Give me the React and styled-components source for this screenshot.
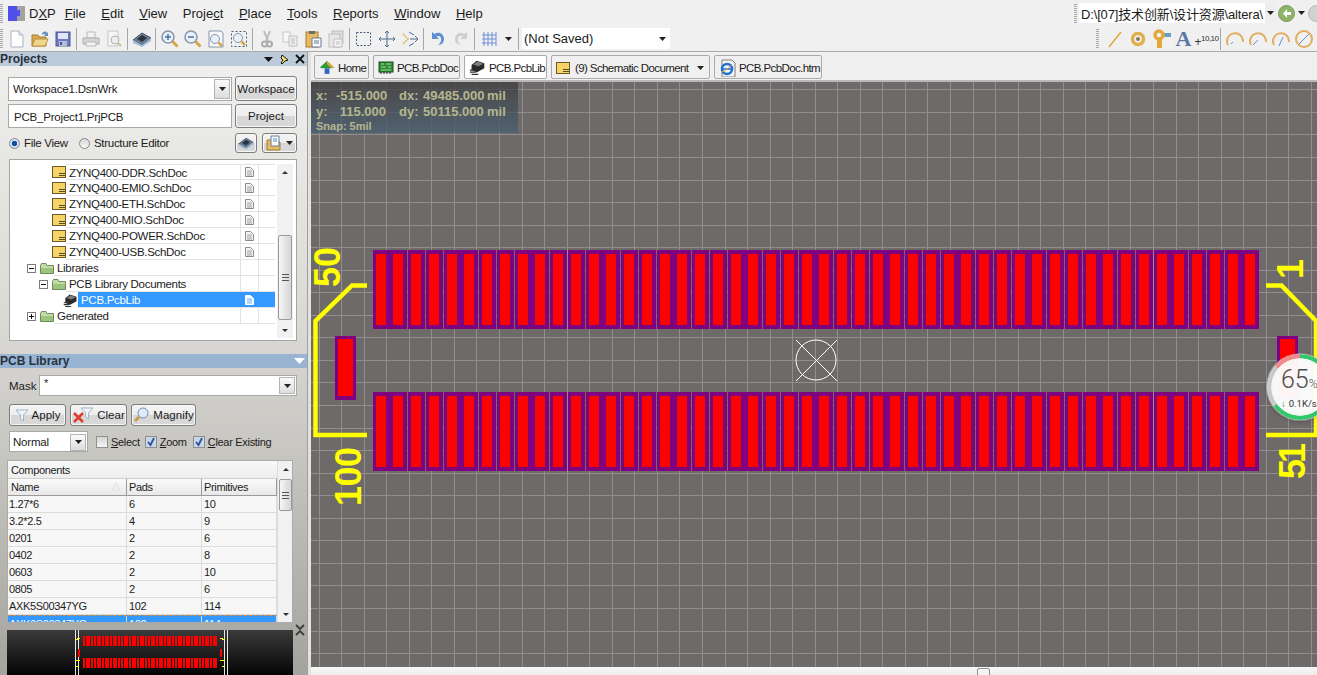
import React from "react";
import styled, { createGlobalStyle } from "styled-components";

const GlobalStyle = createGlobalStyle`
  html, body { margin: 0; padding: 0; background: #f0f0f0; }
  * { box-sizing: border-box; }
  svg { flex: none; }
  body { font-family: "Liberation Sans", "Noto Sans CJK SC", sans-serif; font-size: 12px; color: #1c1c1c; }
`;

const Window = styled.div`
  width: 1317px;
  height: 675px;
  overflow: hidden;
  display: flex;
  flex-direction: column;
  background: #f0f0f0;
`;

const MenuBar = styled.div`
  height: 26px;
  flex: none;
  display: flex;
  align-items: center;
  font-size: 13px;
`;

const Grip = styled.div`
  width: 3px;
  height: 19px;
  flex: none;
  background: repeating-linear-gradient(to bottom, #a8a8a8 0 1px, #f0f0f0 1px 2px);
`;

const LogoBox = styled.div`
  display: flex;
  margin-left: 5px;
  margin-right: 4px;
`;

const MenuItem = styled.span`
  margin-right: ${(p) => p.$gap}px;
  white-space: nowrap;
`;

const PathBox = styled.div`
  width: 197px;
  height: 20px;
  flex: none;
  margin-left: 2px;
  background: #fff;
  display: flex;
  align-items: center;
  font-size: 13px;
  letter-spacing: -0.15px;
  padding-left: 2px;
  position: relative;
  overflow: hidden;
  white-space: nowrap;
`;

const PathCaret = styled.div`
  position: absolute;
  right: 0;
  top: 0;
  width: 11px;
  height: 20px;
  background: #eeeeee;
  display: flex;
  align-items: center;
  justify-content: center;
`;

const Spacer = styled.div`
  flex: 1;
`;

const HistoryNav = styled.div`
  width: 39px;
  margin-left: 2px;
  flex: none;
  display: flex;
  align-items: center;
  gap: 3px;
`;

const ToolBar = styled.div`
  height: 26px;
  flex: none;
  display: flex;
  align-items: center;
  border-bottom: 1px solid #a9a9a9;
  padding-right: 2px;
`;

const ToolGrip = styled(Grip)`
  margin-right: ${(p) => p.$after}px;
`;

const Slot = styled.div`
  width: ${(p) => p.$w || 23}px;
  height: 24px;
  flex: none;
  display: flex;
  align-items: center;
  justify-content: center;
`;

const Sep = styled.div`
  width: 1px;
  height: 22px;
  flex: none;
  margin: 0 2px;
  background: #a6a6a6;
`;

const SavedCombo = styled.div`
  width: 148px;
  height: 21px;
  flex: none;
  margin-left: 1px;
  padding: 0 4px 0 2px;
  background: #fff;
  font-size: 13px;
  display: flex;
  align-items: center;
  justify-content: space-between;
`;

const Main = styled.div`
  flex: 1;
  min-height: 0;
  display: flex;
`;

const SidePanel = styled.div`
  width: 311px;
  flex: none;
  border-right: 3px solid #e2e2de;
  box-shadow: inset -1px 0 0 #9f9f9f;
  background: linear-gradient(to bottom, #f0f0ee 0%, #d9d8d4 45%, #a5a39d 100%);
  overflow: hidden;
`;

const PanelTitle = styled.div`
  height: 14px;
  width: 307px;
  background: ${(p) => p.$bg};
  font-weight: bold;
  font-size: 12px;
  line-height: 15px;
  color: #26323f;
  display: flex;
  align-items: center;
  justify-content: space-between;
  padding-right: 2px;
  margin-top: ${(p) => p.$top || 0}px;
`;

const TitleTools = styled.div`
  display: flex;
  align-items: center;
  gap: 5px;
`;

const Row = styled.div`
  display: flex;
  align-items: center;
  margin-top: ${(p) => p.$top}px;
  padding-left: ${(p) => p.$left}px;
  gap: ${(p) => p.$gap || 0}px;
`;

const Field = styled.div`
  width: ${(p) => p.$w}px;
  height: ${(p) => p.$h || 24}px;
  flex: none;
  background: #fff;
  border: 1px solid #a8a8a6;
  display: flex;
  align-items: center;
  justify-content: space-between;
  padding: 1px 1px 0 ${(p) => p.$pad || 4}px;
  font-size: 11.5px;
  letter-spacing: -0.2px;
  white-space: nowrap;
`;

const DropButton = styled.div`
  width: 16px;
  height: ${(p) => p.$h || 17}px;
  flex: none;
  background: linear-gradient(to bottom, #fafafa, #dcdcdc);
  border: 1px solid #b4b4b4;
  display: flex;
  align-items: center;
  justify-content: center;
`;

const PanelButton = styled.div`
  width: ${(p) => p.$w}px;
  height: ${(p) => p.$h || 25}px;
  flex: none;
  margin-left: ${(p) => p.$left || 0}px;
  border: 1px solid #7e7e7e;
  border-radius: 3px;
  box-shadow: inset 0 0 0 1px #f6f6f6;
  background: linear-gradient(to bottom, #f4f4f4 0%, #ededed 50%, #d6d6d6 52%, #d9d9d9 100%);
  display: flex;
  align-items: center;
  justify-content: center;
  gap: 3px;
  font-size: 11.5px;
  white-space: nowrap;
`;

const RadioLabel = styled.label`
  display: flex;
  align-items: center;
  gap: 4px;
  width: ${(p) => p.$w}px;
  flex: none;
  font-size: 11.5px;
  letter-spacing: -0.3px;
`;

const Radio = styled.span`
  width: 11px;
  height: 11px;
  flex: none;
  border-radius: 50%;
  border: 1px solid #8a8a8a;
  background: ${(p) => (p.$on ? "radial-gradient(circle, #14519c 0 2.5px, #cfe2f4 3px)" : "linear-gradient(#d6d6d6, #f6f6f6)")};
`;

const Tree = styled.div`
  width: 288px;
  height: 182px;
  margin: 6px 0 0 9px;
  background: #fff;
  border: 1px solid #a4a4a4;
  padding: 4px 1px 0 0;
  display: flex;
  gap: 2px;
`;

const TreeRows = styled.div`
  width: 265px;
  flex: none;
`;

const TreeRow = styled.div`
  height: 16px;
  display: flex;
`;

const TreeGutter = styled.div`
  width: ${(p) => p.$w}px;
  flex: none;
  display: flex;
  align-items: center;
  justify-content: flex-end;
  gap: 4px;
`;

const TreeBody = styled.div`
  flex: 1;
  display: flex;
  border-bottom: 1px solid #e3e3e3;
  border-top: ${(p) => (p.$first ? "1px solid #e3e3e3" : "0")};
  background: ${(p) => (p.$sel ? "#3399ff" : "transparent")};
  color: ${(p) => (p.$sel ? "#fff" : "#1c1c1c")};
`;

const TreeLabel = styled.div`
  flex: 1;
  padding-left: 3px;
  font-size: 11.5px;
  letter-spacing: -0.3px;
  line-height: 17px;
  white-space: nowrap;
`;

const TreeCol = styled.div`
  width: ${(p) => p.$w}px;
  flex: none;
  border-left: 1px solid ${(p) => (p.$sel ? "#3399ff" : "#e3e3e3")};
  display: flex;
  align-items: center;
  justify-content: center;
`;

const VScroll = styled.div`
  width: ${(p) => p.$w}px;
  height: ${(p) => p.$h}px;
  flex: none;
  background: #f1f1f1;
  position: relative;
`;

const ScrollArrow = styled.div`
  position: absolute;
  left: 50%;
  margin-left: -3px;
  width: 0;
  height: 0;
  border-left: 3px solid transparent;
  border-right: 3px solid transparent;
  ${(p) => (p.$down ? "bottom: 6px; border-top: 3px solid #333;" : "top: 7px; border-bottom: 3px solid #333;")}
`;

const ScrollThumb = styled.div`
  position: absolute;
  left: 1px;
  right: 1px;
  top: ${(p) => p.$top}px;
  height: ${(p) => p.$h}px;
  border: 1px solid #9a9a9a;
  border-radius: 2px;
  background: linear-gradient(to right, #f6f6f6, #d5d5d5);
  display: flex;
  align-items: center;
  justify-content: center;
  &::after {
    content: "";
    width: 7px;
    height: 7px;
    background: repeating-linear-gradient(to bottom, #555 0 1px, transparent 1px 3px);
  }
`;

const MaskLabel = styled.span`
  width: 30px;
  flex: none;
  font-size: 11.5px;
  padding-top: 1px;
`;

const MaskInput = styled(Field)`
  align-items: flex-start;
  padding-top: 1px;
  font-size: 11px;
  position: relative;
`;

const MaskDrop = styled(DropButton)`
  position: absolute;
  right: 1px;
  top: 1px;
`;

const CheckLabel = styled.label`
  display: flex;
  align-items: center;
  gap: 3px;
  flex: none;
  margin-left: ${(p) => p.$left}px;
  font-size: 11px;
  letter-spacing: -0.3px;
`;

const CheckBox = styled.span`
  width: 12px;
  height: 12px;
  flex: none;
  border: 1px solid #8f8f8f;
  background: ${(p) => (p.$on ? "#c9d6e8" : "linear-gradient(#d4d4d4, #f4f4f4)")};
  display: flex;
  align-items: center;
  justify-content: center;
`;

const CompTable = styled.div`
  width: 286px;
  height: 163px;
  margin: 8px 0 0 7px;
  border: 1px solid #aaaaaa;
  background: #f6f6f6;
  display: flex;
  overflow: hidden;
  font-size: 11px;
  letter-spacing: -0.35px;
`;

const CompBody = styled.div`
  width: 269px;
  flex: none;
`;

const CompTitle = styled.div`
  height: 18px;
  padding-left: 3px;
  line-height: 18px;
  background: linear-gradient(to bottom, #f8f8f8, #eeeeee);
  border-bottom: 1px solid #d0d0d0;
`;

const CompGrid = styled.div`
  display: grid;
  grid-template-columns: 119px 75px 75px;
  height: ${(p) => p.$h || 17}px;
  line-height: 17px;
  background: ${(p) => (p.$sel ? "#3399ff" : p.$head ? "linear-gradient(to bottom, #fbfbfb, #e8e8e8)" : "#f7f7f7")};
  color: ${(p) => (p.$sel ? "#fff" : "#1c1c1c")};
  border-top: ${(p) => (p.$sel ? "1px dashed #e08a2a" : "0")};
  border-bottom: 1px solid ${(p) => (p.$head ? "#9a9a9a" : "#dcdcdc")};
`;

const CompCell = styled.div`
  padding-left: ${(p) => p.$pad || 2}px;
  border-right: 1px solid ${(p) => (p.$head ? "#9a9a9a" : "#dcdcdc")};
  white-space: nowrap;
  position: relative;
  overflow: hidden;
`;

const SortMark = styled.span`
  position: absolute;
  right: 6px;
  top: 0;
  color: #c4c4c4;
  font-size: 8px;
`;

const CompScroll = styled(VScroll)`
  border-left: 1px solid #dddddd;
`;

const PreviewRow = styled.div`
  display: flex;
  align-items: flex-start;
  margin-top: 7px;
  padding-left: 7px;
  position: relative;
`;

const Preview = styled.div`
  width: 286px;
  height: 45px;
  flex: none;
  background: linear-gradient(to bottom, #3a3a3a, #050505);
`;

const PreviewClose = styled.div`
  position: absolute;
  left: 295px;
  top: -6px;
`;

const Workspace = styled.div`
  flex: 1;
  min-width: 0;
  display: flex;
  flex-direction: column;
`;

const TabBar = styled.div`
  height: 30px;
  flex: none;
  display: flex;
  align-items: flex-start;
  padding: 3px 0 0 3px;
  gap: 4px;
  background: #f0f0f0;
  border-bottom: 2px solid #b9b9b9;
`;

const Tab = styled.div`
  width: ${(p) => p.$w}px;
  height: 24px;
  flex: none;
  border: 1px solid #aaaaaa;
  border-radius: 2px;
  background: ${(p) => (p.$active ? "#ffffff" : "#f0f0f0")};
  display: flex;
  align-items: center;
  gap: ${(p) => p.$gap || 3}px;
  padding: 1px 3px 0 4px;
  font-size: 11.5px;
  letter-spacing: -0.6px;
  white-space: nowrap;
`;

const TabCaret = styled.span`
  margin-left: auto;
  margin-right: 2px;
  display: flex;
`;

const CanvasArea = styled.div`
  flex: 1;
  min-height: 0;
  position: relative;
  overflow: hidden;
  background: #6e6a69;
`;

const PcbSvg = styled.svg`
  display: block;
`;

const Hud = styled.div`
  position: absolute;
  left: 0;
  top: 0;
  width: 207px;
  height: 51px;
  padding: 6px 0 0 5px;
  background: linear-gradient(to bottom, rgba(60, 58, 58, 0.72), rgba(72, 96, 114, 0.78));
  color: #b6b68f;
  font-weight: bold;
  font-size: 13px;
  line-height: 16px;
`;

const HudLine = styled.div`
  display: grid;
  grid-template-columns: 20px 50px 13px 24px 60px 4px auto;
`;

const HudValue = styled.span`
  text-align: right;
  white-space: nowrap;
`;

const HudSnap = styled.div`
  font-size: 11px;
  line-height: 13px;
`;

const Meter = styled.div`
  position: absolute;
  left: 956px;
  top: 272px;
  width: 66px;
  height: 66px;
  padding: 15px 0 0 14px;
  border-radius: 50%;
  background: radial-gradient(circle, rgba(255, 255, 255, 0.96) 50%, rgba(222, 244, 230, 0.96) 100%);
  box-shadow: 0 0 0 1px rgba(255, 255, 255, 0.35), 0 1px 4px rgba(0, 0, 0, 0.3);
  color: #4d4d4d;
  font-family: "Roboto", "Liberation Sans", sans-serif;
  white-space: nowrap;
  &::before {
    content: "";
    position: absolute;
    inset: 0;
    border-radius: 50%;
    background: conic-gradient(#2fc96a 0deg 234deg, #c8c8c8 234deg 310deg, #ee8b8b 310deg 360deg);
    -webkit-mask: radial-gradient(closest-side, transparent 86%, #000 88%);
    mask: radial-gradient(closest-side, transparent 86%, #000 88%);
  }
`;

const MeterValue = styled.div`
  font-size: 25px;
  font-weight: 300;
  line-height: 22px;
`;

const MeterUnit = styled.span`
  font-size: 12px;
`;

const MeterSpeed = styled.div`
  margin-top: 3px;
  font-size: 9.5px;
  line-height: 11px;
  color: #333;
`;

const MeterArrow = styled.span`
  color: #13a050;
  font-weight: bold;
  margin-right: 3px;
`;

const HScroll = styled.div`
  height: 8px;
  flex: none;
  background: linear-gradient(to bottom, #f7f7f7, #ececec);
  position: relative;
`;

const HThumb = styled.div`
  position: absolute;
  left: 666px;
  top: 1px;
  width: 13px;
  height: 9px;
  border: 1px solid #8f8f8f;
  border-radius: 2px;
  background: #f4f4f4;
`;

/* ---------- icons ---------- */

const Svg = ({ w = 20, h = 20, vb, children }) => (
  <svg width={w} height={h} viewBox={vb || `0 0 ${w} ${h}`}>
    {children}
  </svg>
);

const Caret = ({ c = "#222" }) => (
  <Svg w={7} h={4}>
    <path d="M0 0h7L3.5 4z" fill={c} />
  </Svg>
);

const Logo = () => (
  <Svg w={17} h={15}>
    <rect width="9" height="15" fill="#4f50ea" />
    <rect x="9" width="8" height="15" fill="#a3a3a3" />
    <rect x="9" y="4" width="3" height="6" fill="#4f50ea" />
  </Svg>
);

const NewIcon = () => (
  <Svg>
    <path d="M4 2h8l4 4v12H4z" fill="#fdfdfd" stroke="#a9b4c4" />
    <path d="M12 2v4h4" fill="#dfe6f1" stroke="#a9b4c4" />
  </Svg>
);

const OpenIcon = () => (
  <Svg>
    <path d="M2 6h6l1 2h7v9H2z" fill="#d8a94e" stroke="#a57e33" />
    <path d="M2 17l3-7h13l-3 7z" fill="#f3d68d" stroke="#b9913f" />
    <path d="M12 5c1-3 4-3 5-1l1-1v4h-4l1.300-1.200c-.8-1-2-1-3 .2z" fill="#6b8fbd" />
  </Svg>
);

const SaveIcon = () => (
  <Svg>
    <rect x="3" y="3" width="14" height="14" fill="#6f78c4" stroke="#4e568f" />
    <rect x="5" y="4" width="10" height="6" fill="#e2e6f6" />
    <rect x="6" y="12" width="8" height="5" fill="#b8bdd8" />
    <rect x="7" y="13" width="2" height="3" fill="#4e568f" />
  </Svg>
);

const PrintIcon = () => (
  <Svg>
    <path d="M6 3h8v6H6z" fill="#f2f2f2" stroke="#b9b9b9" />
    <path d="M2 9h16v6H2z" fill="#d4d4d4" stroke="#acacac" />
    <path d="M5 13h10v4H5z" fill="#f2f2f2" stroke="#b9b9b9" />
  </Svg>
);

const PreviewIcon = () => (
  <Svg>
    <path d="M4 2h10v15H4z" fill="#f5f5f5" stroke="#c6c6c6" />
    <circle cx="11" cy="11" r="4" fill="#eeeeee" stroke="#b3b3b3" />
    <path d="M14 14l3 3" stroke="#c9c09c" strokeWidth="2" />
  </Svg>
);

const ChipIcon = ({ s = 20 }) => (
  <Svg w={s} h={s} vb="0 0 20 20">
    <path d="M1 11l9-7 9 5-9 7z" fill="#6a7f96" stroke="#4a5563" />
    <path d="M5 10l5-4 5 3-5 4z" fill="#2c3440" />
    <path d="M1 11v3l9 4 9-6V9l-9 7z" fill="#a3bcd6" />
  </Svg>
);

const DarkChip = ({ s = 16 }) => (
  <Svg w={s} h={s} vb="0 0 20 20">
    <path d="M9 2l9 3v6l-9 5-6-3V7z" fill="#2a2a2a" />
    <path d="M10 3l7 2.500-6 3-6-2z" fill="#7d7d7d" />
    <path d="M1 13h5M1 15.500h7M3 18h8" stroke="#333" strokeWidth="1.500" />
  </Svg>
);

const Glass = ({ children }) => (
  <Svg>
    <circle cx="8" cy="8" r="6" fill="#e8f0fa" stroke="#8796a8" strokeWidth="1.500" />
    <path d="M12.500 12.500l5 5" stroke="#d7a548" strokeWidth="3" />
    {children}
  </Svg>
);

const ZoomIn = () => (
  <Glass>
    <path d="M5 8h6M8 5v6" stroke="#49709f" strokeWidth="1.500" />
  </Glass>
);

const ZoomOut = () => (
  <Glass>
    <path d="M5 8h6" stroke="#49709f" strokeWidth="1.500" />
  </Glass>
);

const ZoomPage = () => (
  <Svg>
    <path d="M3 2h12l2 2v14H3z" fill="#f6f8fb" stroke="#8796a8" />
    <circle cx="9" cy="10" r="4.500" fill="#e8f0fa" stroke="#8796a8" />
    <path d="M12.500 13.500l3.500 3.500" stroke="#d7a548" strokeWidth="2.500" />
  </Svg>
);

const ZoomSel = () => (
  <Svg>
    <rect x="2.500" y="2.500" width="15" height="15" fill="none" stroke="#4a5d78" strokeDasharray="2 2" />
    <circle cx="9" cy="9" r="4.500" fill="#e8f0fa" stroke="#8796a8" />
    <path d="M12.500 12.500l3.500 3.500" stroke="#d7a548" strokeWidth="2.500" />
  </Svg>
);

const CutIcon = () => (
  <Svg>
    <path d="M7 2l4 10M13 2L9 12" stroke="#bdbdbd" strokeWidth="2" />
    <circle cx="7.500" cy="15" r="2.500" fill="none" stroke="#adadad" strokeWidth="2" />
    <circle cx="12.500" cy="15" r="2.500" fill="none" stroke="#adadad" strokeWidth="2" />
  </Svg>
);

const CopyIcon = () => (
  <Svg>
    <path d="M3 3h7v10H3z" fill="#f6f6f6" stroke="#c6c6c6" />
    <path d="M9 7h8v10H9z" fill="#efefef" stroke="#bdbdbd" />
    <path d="M11 10h4M11 12h4M11 14h4" stroke="#bdbdbd" />
  </Svg>
);

const PasteIcon = () => (
  <Svg>
    <rect x="3" y="3" width="12" height="15" fill="#e6bb62" stroke="#a27a2f" />
    <rect x="6" y="2" width="6" height="3" fill="#6c6c6c" />
    <path d="M9 9h9v9H9z" fill="#f7f8fb" stroke="#6b7b94" />
    <path d="M11 12h5M11 14h5" stroke="#6b7b94" />
  </Svg>
);

const PasteGrey = () => (
  <Svg>
    <rect x="6" y="2" width="11" height="12" fill="#dddddd" stroke="#bdbdbd" />
    <rect x="3" y="5" width="11" height="13" fill="#e6e6e6" stroke="#bdbdbd" />
    <path d="M8 10h8v8H8z" fill="#f5f5f5" stroke="#bdbdbd" />
    <path d="M10 13h4M10 15h4" stroke="#bdbdbd" />
  </Svg>
);

const SelectRect = () => (
  <Svg>
    <rect x="2.500" y="3.500" width="14" height="13" fill="none" stroke="#4a5d78" strokeDasharray="2 1.500" />
  </Svg>
);

const MoveIcon = () => (
  <Svg>
    <path d="M10 2v16M2 10h16M8 4l2-2 2 2M8 16l2 2 2-2M4 8l-2 2 2 2M16 8l2 2-2 2" fill="none" stroke="#4f6b8e" />
  </Svg>
);

const MoveSel = () => (
  <Svg>
    <path d="M3 5l5 5-5 5" fill="none" stroke="#d8b948" strokeWidth="1.500" strokeDasharray="2 1" />
    <path d="M10 10h8M15 7l3 3-3 3" fill="none" stroke="#4f6b8e" />
    <path d="M9 3l5 3M9 17l5-3" stroke="#4f6b8e" />
  </Svg>
);

const UndoIcon = ({ c = "#5f8fd0" }) => (
  <Svg>
    <path d="M4 3v7h7L8.500 7.500C11 6 14 8 13 12c-.5 2-2 3-3 4 4 0 6-3 6-6 0-5-5-8-9.500-5z" fill={c} />
  </Svg>
);

const RedoIcon = () => (
  <Svg>
    <g transform="matrix(-1 0 0 1 20 0)">
      <path d="M4 3v7h7L8.500 7.500C11 6 14 8 13 12c-.5 2-2 3-3 4 4 0 6-3 6-6 0-5-5-8-9.500-5z" fill="#cfcfcf" />
    </g>
  </Svg>
);

const GridIcon = () => (
  <Svg>
    <path d="M3 6h14M3 10h14M3 14h14M5 3v14M9 3v14M13 3v14M17 3v14" stroke="#6f8fd8" />
  </Svg>
);

const LineIcon = () => (
  <Svg>
    <path d="M4 18L16 3" stroke="#e0a93a" strokeWidth="1.500" />
  </Svg>
);

const PadIcon = () => (
  <Svg>
    <circle cx="10" cy="10" r="5.500" fill="none" stroke="#e0b04a" strokeWidth="3.500" />
    <circle cx="10" cy="10" r="2" fill="#8a7a50" />
  </Svg>
);

const ViaIcon = () => (
  <Svg>
    <path d="M6 11h5v8H6z" fill="#e0a93a" />
    <rect x="12" y="4" width="8" height="4" fill="#6aa0c8" />
    <circle cx="8" cy="6" r="4" fill="none" stroke="#e0a93a" strokeWidth="3.500" />
  </Svg>
);

const Letter = styled.span`
  font-family: "Liberation Serif", serif;
  font-size: 22px;
  line-height: 22px;
  color: #5b78a8;
  font-weight: bold;
`;

const CoordText = styled.span`
  font-size: 8px;
  letter-spacing: -0.5px;
  display: flex;
  align-items: center;
  color: #333;
`;

const CoordPlus = styled.span`
  font-size: 12px;
  margin-top: 6px;
`;

const ArcIcon = ({ kind }) => (
  <Svg>
    {kind === 3 ? (
      <circle cx="10" cy="10" r="8" fill="none" stroke="#e3ad62" strokeWidth="2" />
    ) : (
      <path d="M3 16A8 8 0 1 1 18 13" fill="none" stroke="#e3ad62" strokeWidth="2" />
    )}
    <path
      d={kind === 0 ? "M6 15l2-2" : kind === 1 ? "M5 16l5-5" : kind === 2 ? "M8 17l4-9" : "M5 15l10-10"}
      stroke="#5f8fd0"
    />
  </Svg>
);

const BackIcon = () => (
  <Svg w={17} h={17}>
    <circle cx="8.500" cy="8.500" r="8" fill="#8fb36a" stroke="#7a9c58" />
    <path d="M9 4L5 8.500 9 13v-3h4V7H9z" fill="#fff" />
  </Svg>
);

const ForwardGrey = () => (
  <Svg w={17} h={17}>
    <circle cx="8.500" cy="8.500" r="8" fill="#d2d2d2" stroke="#b9b9b9" />
  </Svg>
);

const DownTri = ({ c = "#111", w = 9, h = 5 }) => (
  <Svg w={w} h={h}>
    <path d={`M0 0h${w}L${w / 2} ${h}z`} fill={c} />
  </Svg>
);

const PinIcon = () => (
  <Svg w={12} h={12}>
    <path d="M4 2l6 5-3 1-3 3-1-1 2-3-2-2z" fill="#f3e26a" stroke="#111" />
  </Svg>
);

const CloseIcon = () => (
  <Svg w={10} h={10}>
    <path d="M1 1l8 8M9 1L1 9" stroke="#111" strokeWidth="1.800" />
  </Svg>
);

const SchIcon = () => (
  <Svg w={14} h={12}>
    <rect x=".5" y=".5" width="13" height="11" fill="#f6d467" stroke="#6e5a24" />
    <rect x="7" y="7" width="6" height="1" fill="#5b4a1a" />
    <rect x="7" y="9" width="6" height="1" fill="#5b4a1a" />
  </Svg>
);

const FolderIcon = () => (
  <Svg w={14} h={11}>
    <path d="M.5 2.500V10.500h13V2.500H7L6 .5H1.500z" fill="#bfdca6" stroke="#6d8a58" />
    <rect x="1" y="5" width="12" height="5" fill="#9cc480" />
  </Svg>
);

const PlusMinus = ({ open }) => (
  <Svg w={9} h={9}>
    <rect x=".5" y=".5" width="8" height="8" fill="#fff" stroke="#7b7b7b" />
    <path d={open ? "M2 4.500h5" : "M2 4.500h5M4.500 2v5"} stroke="#111" />
  </Svg>
);

const DocIcon = ({ c = "#8a8a8a" }) => (
  <Svg w={9} h={10}>
    <path d="M.5.500h5l3 3v6h-8z" fill={c === "#fff" ? "#fff" : "#f6f6f6"} stroke={c} />
    <path d="M2 4h5M2 6h5M2 8h5" stroke={c === "#fff" ? "#3399ff" : c} strokeWidth=".8" />
  </Svg>
);

const FilterIcon = ({ c = "#9fb3c9" }) => (
  <Svg w={14} h={13}>
    <path d="M1 1h12L8.500 6v6l-3-2V6z" fill="#f2f5f8" stroke={c} />
  </Svg>
);

const ClearIcon = () => (
  <Svg w={22} h={16}>
    <g transform="translate(8 0)">
      <path d="M1 1h12L8.500 6v6l-3-2V6z" fill="#f2f5f8" stroke="#9fb3c9" />
    </g>
    <path d="M2 6l9 9M11 6l-9 9" stroke="#e23a2e" strokeWidth="2.500" />
  </Svg>
);

const MagnifyIcon = () => (
  <Svg w={17} h={16}>
    <circle cx="10" cy="6" r="5" fill="#dfeafa" stroke="#6f8cb5" />
    <path d="M6 10l-4 4" stroke="#c99a45" strokeWidth="3" />
  </Svg>
);

const Tick = () => (
  <Svg w={10} h={10}>
    <path d="M2 5l2.500 3L8 1" fill="none" stroke="#2e4f9c" strokeWidth="1.800" />
  </Svg>
);

const HomeIcon = () => (
  <Svg w={16} h={15} vb="0 0 20 18">
    <path d="M1 9l9-8 9 8-3 1H4z" fill="#2f9a34" />
    <path d="M10 1l9 8-3 1-6-5z" fill="#e0a93a" />
    <rect x="7" y="10" width="6" height="7" fill="#2d67c0" />
  </Svg>
);

const BoardIcon = () => (
  <Svg w={16} h={14}>
    <rect x="1" y="1" width="14" height="10" fill="#2f8a3e" stroke="#14501f" />
    <path d="M3 3h3M8 3h5M3 6h5M10 6h3M3 9h10" stroke="#9be07a" />
    <path d="M3 11v2M6 11v2M9 11v2M12 11v2" stroke="#222" />
  </Svg>
);

const IeIcon = () => (
  <Svg w={17} h={18}>
    <path d="M3 1h10l3 3v14H3z" fill="#f3f3f3" stroke="#7d7d7d" />
    <circle cx="8" cy="10" r="5" fill="none" stroke="#1f6fd6" strokeWidth="2.500" />
    <path d="M4 10h8" stroke="#1f6fd6" strokeWidth="1.500" />
    <path d="M2 13c3 0 9-5 11-8" stroke="#e0a93a" fill="none" />
  </Svg>
);

const Chevrons = () => (
  <Svg w={10} h={12}>
    <path d="M1 1l4 4 4-4M1 11l4-4 4 4" fill="none" stroke="#3c3c3c" strokeWidth="1.800" />
  </Svg>
);

const OpenDocIcon = () => (
  <Svg w={17} h={16}>
    <path d="M1 5h5l1 2h7v8H1z" fill="#e6bb62" stroke="#a27a2f" />
    <path d="M5 1h8v10H5z" fill="#f7f8fb" stroke="#6b7b94" />
    <path d="M7 4h4M7 6h4" stroke="#5f8fd0" />
  </Svg>
);

/* ---------- data ---------- */

const menus = [
  { pre: "", u: "F", post: "ile", gap: 15.6 },
  { pre: "", u: "E", post: "dit", gap: 15.6 },
  { pre: "", u: "V", post: "iew", gap: 15.6 },
  { pre: "Proje", u: "c", post: "t", gap: 15.6 },
  { pre: "", u: "P", post: "lace", gap: 15.6 },
  { pre: "", u: "T", post: "ools", gap: 15.6 },
  { pre: "", u: "R", post: "eports", gap: 15.6 },
  { pre: "", u: "W", post: "indow", gap: 15.6 },
  { pre: "", u: "H", post: "elp", gap: 0 },
];

const toolGroups = [
  [NewIcon, OpenIcon, SaveIcon],
  [PrintIcon, PreviewIcon],
  [ChipIcon],
  [ZoomIn, ZoomOut, ZoomPage, ZoomSel],
  [CutIcon, CopyIcon, PasteIcon, PasteGrey],
  [SelectRect, MoveIcon, MoveSel],
  [UndoIcon, RedoIcon],
];

const treeRows = [
  { w: 56, icon: "sch", text: "ZYNQ400-DDR.SchDoc", doc: true, first: true },
  { w: 56, icon: "sch", text: "ZYNQ400-EMIO.SchDoc", doc: true },
  { w: 56, icon: "sch", text: "ZYNQ400-ETH.SchDoc", doc: true },
  { w: 56, icon: "sch", text: "ZYNQ400-MIO.SchDoc", doc: true },
  { w: 56, icon: "sch", text: "ZYNQ400-POWER.SchDoc", doc: true },
  { w: 56, icon: "sch", text: "ZYNQ400-USB.SchDoc", doc: true },
  { w: 44, icon: "folder", exp: "open", text: "Libraries" },
  { w: 56, icon: "folder", exp: "open", text: "PCB Library Documents" },
  { w: 68, icon: "chip", text: "PCB.PcbLib", doc: true, sel: true },
  { w: 44, icon: "folder", exp: "closed", text: "Generated" },
];

const components = [
  ["1.27*6", "6", "10"],
  ["3.2*2.5", "4", "9"],
  ["0201", "2", "6"],
  ["0402", "2", "8"],
  ["0603", "2", "10"],
  ["0805", "2", "6"],
  ["AXK5S00347YG", "102", "114"],
];

/* ---------- pcb drawing ---------- */

const padX = Array.from({ length: 50 }, (_, i) => 373 + Math.floor(17.75 * i));
const gridX = Array.from({ length: 45 }, (_, i) => Math.round(318.6 + 22.55 * i));
const gridY = Array.from({ length: 26 }, (_, i) => Math.round(89.3 + 22.55 * i));

const PadRow = ({ y }) => (
  <g opacity="0.97">
    {padX.map((x) => (
      <g key={x}>
        <rect x={x} y={y} width="17" height="79" fill="#800080" />
        <rect x={x + 3} y={y + 4} width="10" height="71" fill="#ff0000" />
      </g>
    ))}
  </g>
);

const SideText = ({ x, y, spacing = 0, children }) => (
  <text
    x={x}
    y={y}
    transform={`rotate(-90 ${x} ${y})`}
    fill="#ffff00"
    fontFamily="Liberation Sans"
    fontWeight="bold"
    fontSize="36"
    letterSpacing={spacing}
  >
    {children}
  </text>
);

const PcbDrawing = () => (
  <PcbSvg width="1006" height="585" viewBox="311 82 1006 585" shapeRendering="crispEdges">
    {gridX.map((x) => (
      <line key={x} x1={x + 0.5} x2={x + 0.5} y1="82" y2="667" stroke="#918e8e" />
    ))}
    {gridY.map((y) => (
      <line key={y} y1={y + 0.5} y2={y + 0.5} x1="311" x2="1317" stroke="#918e8e" />
    ))}
    <PadRow y={250} />
    <PadRow y={392} />
    <rect x="335" y="336" width="21" height="64" fill="#800080" />
    <rect x="338" y="339" width="15" height="57" fill="#ff0000" />
    <rect x="1277" y="336" width="21" height="64" fill="#800080" />
    <rect x="1280" y="339" width="15" height="57" fill="#ff0000" />
    <g shapeRendering="auto" fill="none" stroke="#ffff00" strokeWidth="4.500">
      <path d="M367 285.500H352L315.500 321V435H367" />
      <path d="M1266 285.500H1281.500L1316 321V435H1266" />
    </g>
    <g shapeRendering="auto">
      <SideText x={340} y={287}>50</SideText>
      <SideText x={361} y={506} spacing={-0.5}>100</SideText>
      <SideText x={1303} y={279}>1</SideText>
      <SideText x={1305} y={479} spacing={-4}>51</SideText>
      <circle cx="816" cy="360" r="20" fill="none" stroke="#fff" />
      <path d="M796 340L837 381M837 340L796 381" stroke="#fff" />
    </g>
  </PcbSvg>
);

const PreviewDrawing = () => (
  <svg width="286" height="45" viewBox="7 630 286 45" shapeRendering="crispEdges">
    <path d="M75.500 630V675M78.500 630V675M224.500 630V675M227.500 630V675" stroke="#e8e8e8" />
    {Array.from({ length: 50 }, (_, i) => 83 + i * 2.7).map((x) => (
      <g key={x} fill="#ff0000">
        <rect x={x} y="636" width="2" height="10" />
        <rect x={x} y="658" width="2" height="10" />
      </g>
    ))}
    <rect x="78" y="649" width="2" height="8" fill="#ff0000" />
    <rect x="220" y="649" width="2" height="8" fill="#ff0000" />
    <path d="M75 640l5-2M75 660h5M75 666h4M220 638l5 2M220 660h5M222 666h3" stroke="#ffff00" />
  </svg>
);

const MeterReadout = () => (
  <Meter>
    <MeterValue>
      65<MeterUnit>%</MeterUnit>
    </MeterValue>
    <MeterSpeed>
      <MeterArrow>↓</MeterArrow>0.1K/s
    </MeterSpeed>
  </Meter>
);

const treeIcon = (icon) => {
  if (icon === "sch") return <SchIcon />;
  if (icon === "folder") return <FolderIcon />;
  return <DarkChip s={15} />;
};

const App = () => {
  return (
    <Window>
      <GlobalStyle />
      <MenuBar>
        <Grip />
        <LogoBox>
          <Logo />
        </LogoBox>
        <MenuItem $gap={9}>
          D<u>X</u>P
        </MenuItem>
        {menus.map((m) => (
          <MenuItem key={m.u + m.post} $gap={m.gap}>
            {m.pre}
            <u>{m.u}</u>
            {m.post}
          </MenuItem>
        ))}
        <Spacer />
        <Grip />
        <PathBox>
          D:\[07]技术创新\设计资源\altera\
          <PathCaret>
            <Caret />
          </PathCaret>
        </PathBox>
        <HistoryNav>
          <BackIcon />
          <Caret />
          <ForwardGrey />
        </HistoryNav>
      </MenuBar>

      <ToolBar>
        <ToolGrip $after={2} />
        {toolGroups.map((group, i) => (
          <React.Fragment key={i}>
            {group.map((Icon, j) => (
              <Slot key={j}>
                <Icon />
              </Slot>
            ))}
            <Sep />
          </React.Fragment>
        ))}
        <Slot>
          <GridIcon />
        </Slot>
        <Slot $w={16}>
          <Caret />
        </Slot>
        <Sep />
        <SavedCombo>
          (Not Saved)
          <Caret />
        </SavedCombo>
        <Spacer />
        <ToolGrip $after={4} />
        <Slot>
          <LineIcon />
        </Slot>
        <Slot>
          <PadIcon />
        </Slot>
        <Slot>
          <ViaIcon />
        </Slot>
        <Slot>
          <Letter>A</Letter>
        </Slot>
        <Slot>
          <CoordText>
            <CoordPlus>+</CoordPlus>10,10
          </CoordText>
        </Slot>
        <Sep />
        <Slot>
          <ArcIcon kind={0} />
        </Slot>
        <Slot>
          <ArcIcon kind={1} />
        </Slot>
        <Slot>
          <ArcIcon kind={2} />
        </Slot>
        <Slot>
          <ArcIcon kind={3} />
        </Slot>
      </ToolBar>

      <Main>
        <SidePanel>
          <PanelTitle $bg="#bccbd9">
            Projects
            <TitleTools>
              <DownTri />
              <PinIcon />
              <CloseIcon />
            </TitleTools>
          </PanelTitle>

          <Row $top={10} $left={8} $gap={3}>
            <Field $w={224} $pad={4}>
              Workspace1.DsnWrk
              <DropButton $h={20}>
                <Caret />
              </DropButton>
            </Field>
            <PanelButton $w={62}>Workspace</PanelButton>
          </Row>
          <Row $top={3} $left={8} $gap={3}>
            <Field $w={224} $pad={5}>
              PCB_Project1.PrjPCB
            </Field>
            <PanelButton $w={62} $h={24}>
              Project
            </PanelButton>
          </Row>
          <Row $top={5} $left={9}>
            <RadioLabel $w={70}>
              <Radio $on />
              File View
            </RadioLabel>
            <RadioLabel $w={156}>
              <Radio />
              Structure Editor
            </RadioLabel>
            <PanelButton $w={22} $h={20}>
              <ChipIcon s={16} />
            </PanelButton>
            <PanelButton $w={35} $h={20} $left={5}>
              <OpenDocIcon />
              <Caret />
            </PanelButton>
          </Row>

          <Tree>
            <TreeRows>
              {treeRows.map((r) => (
                <TreeRow key={r.text}>
                  <TreeGutter $w={r.w}>
                    {r.exp && <PlusMinus open={r.exp === "open"} />}
                    {treeIcon(r.icon)}
                  </TreeGutter>
                  <TreeBody $sel={r.sel} $first={r.first}>
                    <TreeLabel>{r.text}</TreeLabel>
                    <TreeCol $w={18} $sel={r.sel}>
                      {r.doc && <DocIcon c={r.sel ? "#fff" : "#8a8a8a"} />}
                    </TreeCol>
                    <TreeCol $w={17} $sel={r.sel} />
                  </TreeBody>
                </TreeRow>
              ))}
            </TreeRows>
            <VScroll $w={16} $h={174}>
              <ScrollArrow />
              <ScrollThumb $top={71} $h={85} />
              <ScrollArrow $down />
            </VScroll>
          </Tree>

          <PanelTitle $bg="#98b4d2" $top={13}>
            PCB Library
            <DownTri c="#fff" w={11} h={6} />
          </PanelTitle>

          <Row $top={7} $left={9}>
            <MaskLabel>Mask</MaskLabel>
            <MaskInput $w={258} $h={21}>
              *
              <MaskDrop $h={17}>
                <Caret />
              </MaskDrop>
            </MaskInput>
          </Row>
          <Row $top={8} $left={9} $gap={4}>
            <PanelButton $w={57} $h={22}>
              <FilterIcon />
              Apply
            </PanelButton>
            <PanelButton $w={57} $h={22}>
              <ClearIcon />
              Clear
            </PanelButton>
            <PanelButton $w={65} $h={22}>
              <MagnifyIcon />
              Magnify
            </PanelButton>
          </Row>
          <Row $top={5} $left={9}>
            <Field $w={79} $h={21} $pad={3}>
              Normal
              <DropButton $h={17}>
                <Caret />
              </DropButton>
            </Field>
            <CheckLabel $left={8}>
              <CheckBox />
              <span>
                <u>S</u>elect
              </span>
            </CheckLabel>
            <CheckLabel $left={5}>
              <CheckBox $on>
                <Tick />
              </CheckBox>
              <span>
                <u>Z</u>oom
              </span>
            </CheckLabel>
            <CheckLabel $left={6}>
              <CheckBox $on>
                <Tick />
              </CheckBox>
              <span>
                <u>C</u>lear Existing
              </span>
            </CheckLabel>
          </Row>

          <CompTable>
            <CompBody>
              <CompTitle>Components</CompTitle>
              <CompGrid $head>
                <CompCell $head $pad={3}>
                  Name<SortMark>△</SortMark>
                </CompCell>
                <CompCell $head>Pads</CompCell>
                <CompCell $head>Primitives</CompCell>
              </CompGrid>
              {components.map(([name, pads, prims]) => (
                <CompGrid key={name}>
                  <CompCell $pad={1}>{name}</CompCell>
                  <CompCell>{pads}</CompCell>
                  <CompCell>{prims}</CompCell>
                </CompGrid>
              ))}
              <CompGrid $sel>
                <CompCell $pad={1}>AXK6S00347YG</CompCell>
                <CompCell>102</CompCell>
                <CompCell>114</CompCell>
              </CompGrid>
            </CompBody>
            <CompScroll $w={16} $h={161}>
              <ScrollArrow />
              <ScrollThumb $top={18} $h={32} />
              <ScrollArrow $down />
            </CompScroll>
          </CompTable>

          <PreviewRow>
            <Preview>
              <PreviewDrawing />
            </Preview>
            <PreviewClose>
              <Chevrons />
            </PreviewClose>
          </PreviewRow>
        </SidePanel>

        <Workspace>
          <TabBar>
            <Tab $w={55}>
              <HomeIcon />
              Home
            </Tab>
            <Tab $w={87}>
              <BoardIcon />
              PCB.PcbDoc
            </Tab>
            <Tab $w={83} $active>
              <DarkChip s={17} />
              PCB.PcbLib
            </Tab>
            <Tab $w={159} $gap={5}>
              <SchIcon />
              (9) Schematic Document
              <TabCaret>
                <Caret />
              </TabCaret>
            </Tab>
            <Tab $w={108}>
              <IeIcon />
              PCB.PcbDoc.htm
            </Tab>
          </TabBar>
          <CanvasArea>
            <PcbDrawing />
            <Hud>
              <HudLine>
                <span>x:</span>
                <HudValue>-515.000</HudValue>
                <span />
                <span>dx:</span>
                <HudValue>49485.000</HudValue>
                <span />
                <span>mil</span>
              </HudLine>
              <HudLine>
                <span>y:</span>
                <HudValue>115.000</HudValue>
                <span />
                <span>dy:</span>
                <HudValue>50115.000</HudValue>
                <span />
                <span>mil</span>
              </HudLine>
              <HudSnap>Snap: 5mil</HudSnap>
            </Hud>
            <MeterReadout />
          </CanvasArea>
          <HScroll>
            <HThumb />
          </HScroll>
        </Workspace>
      </Main>
    </Window>
  );
};

export default App;
